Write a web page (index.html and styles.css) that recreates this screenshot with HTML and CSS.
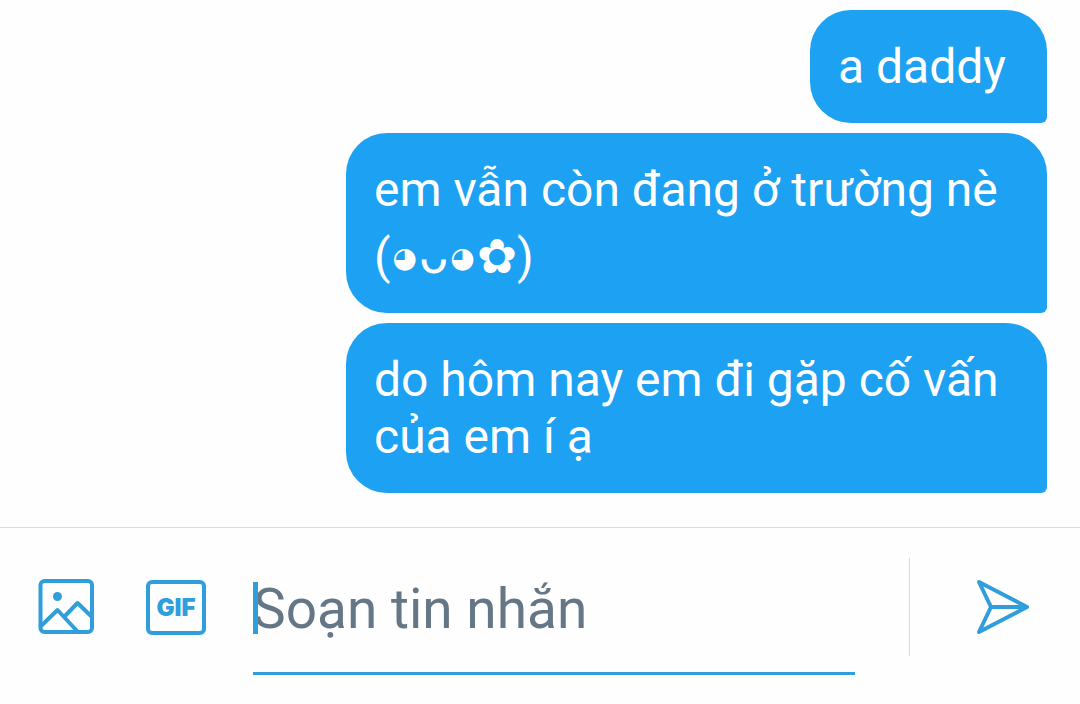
FILE: index.html
```html
<!DOCTYPE html>
<html lang="vi">
  <head>
    <meta charset="utf-8">
    <meta name="viewport" content="width=device-width, initial-scale=1">
    <title>Tin nhắn</title>
    <link rel="stylesheet" href="styles.css">
  </head>
  <body>
    <main class="messages">
      <p class="bubble">a daddy</p>
      <p class="bubble">
        em vẫn còn đang ở trường nè
        <span class="kaomoji">(<span class="eye">◕</span>ᴗ<span class="eye">◕</span>✿)</span>
      </p>
      <p class="bubble">do hôm nay em đi gặp cố vấn của em í ạ</p>
    </main>

    <form class="composer">
      <div class="tools">
        <button class="btn" type="button" aria-label="Ảnh">
          <svg class="icon" width="56" height="56" viewBox="0 0 56 56">
            <rect x="2.5" y="2" width="51.5" height="51" rx="4" />
            <path d="M3 47 L19.5 31 L40 53 M27 37 L39.5 24 L54 38" />
            <circle class="dot" cx="19.5" cy="17.5" r="4.5" />
          </svg>
        </button>
        <button class="btn" type="button" aria-label="GIF">
          <span class="gif">GIF</span>
        </button>
      </div>

      <div class="field">
        <input class="input" type="text" placeholder="Soạn tin nhắn" aria-label="Soạn tin nhắn">
        <span class="caret"></span>
      </div>

      <div class="send">
        <button class="btn" type="submit" aria-label="Gửi">
          <svg class="icon" width="56" height="56" viewBox="0 0 56 56">
            <path d="M4 3 L52 28 L4 53 L16 28 Z M16 28 H52" />
          </svg>
        </button>
      </div>
    </form>
  </body>
</html>
```
FILE: styles.css
```css
* {
  box-sizing: border-box;
}
body {
  display: flex;
  flex-direction: column;
  min-height: 100vh;
  margin: 0;
  background: #fefefe;
  font-family: Roboto, "DejaVu Sans", sans-serif;
}
.messages {
  display: flex;
  flex: 1;
  flex-direction: column;
  align-items: flex-end;
  gap: 10px;
  padding: 10px 33px 33px;
}
.bubble {
  max-width: 701px;
  margin: 0;
  padding: 28px 41px 28px 28px;
  border-radius: 41px 41px 6px 41px;
  background: #1da1f2;
  color: #fff;
  font-size: 48px;
  line-height: 57px;
}
.kaomoji {
  display: inline-block;
  padding-top: 10px;
}
.eye {
  margin: 0 2px;
  font-size: 28px;
  line-height: 1;
  vertical-align: 6px;
}
.composer {
  display: flex;
  align-items: flex-start;
  padding: 30px 49px 29px 38px;
  border-top: 1px solid #d9dcde;
}
.tools {
  display: flex;
  align-items: center;
  gap: 52px;
  height: 98px;
}
.btn {
  display: block;
  padding: 0;
  border: none;
  background: none;
  cursor: pointer;
}
.icon {
  display: block;
  fill: none;
  stroke: #2f9edb;
  stroke-width: 4;
  stroke-linejoin: round;
  stroke-linecap: round;
}
.icon .dot {
  fill: #2f9edb;
  stroke: none;
}
.gif {
  display: block;
  width: 60px;
  height: 55px;
  border: 4px solid #2f9edb;
  border-radius: 6px;
  color: #2f9edb;
  font-family: Inter, sans-serif;
  font-size: 24px;
  font-weight: 900;
  line-height: 47px;
  text-align: center;
}
.field {
  position: relative;
  flex: 1;
  margin: 0 54px 0 47px;
}
.input {
  display: block;
  width: 100%;
  height: 117px;
  padding: 0 0 12px;
  border: none;
  border-bottom: 3px solid #2f9edb;
  outline: none;
  background: none;
  color: #657786;
  font-family: inherit;
  font-size: 55px;
}
.input::placeholder {
  color: #657786;
  opacity: 1;
}
.caret {
  position: absolute;
  top: 24px;
  left: 0;
  width: 5px;
  height: 52px;
  background: #2f9edb;
}
.send {
  display: flex;
  align-items: center;
  height: 98px;
  padding-left: 65px;
  border-left: 1px solid #d9dcde;
}
```
